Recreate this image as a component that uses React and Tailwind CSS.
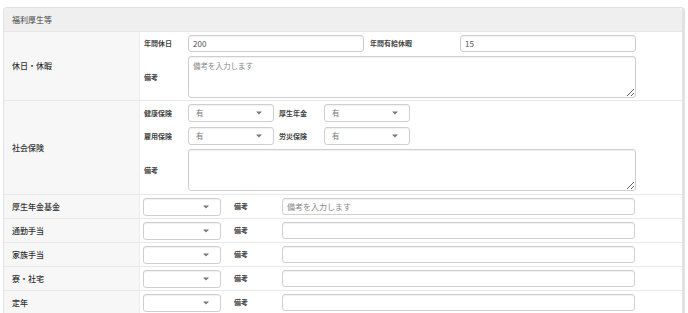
import React from 'react'

const font = { fontFamily: '"Noto Sans CJK JP", "Noto Sans", sans-serif' }

function Caret() {
    return <span className="absolute right-[11px] top-1/2 -translate-y-1/2 w-0 h-0 border-l-[3px] border-r-[3px] border-t-[3px] border-l-transparent border-r-transparent border-t-[#777]"></span>
}

function Select({ value, width }) {
    return (
        <div className={`relative h-[18px] ${width} border border-[#cfcfcf] rounded-[3px] bg-white shadow-[inset_0_1px_1px_rgba(0,0,0,0.06)] flex items-center pl-[7px] text-[7.5px] text-[#777]`}>
            {value}
            <Caret />
        </div>
    )
}

function SubLabel({ children, width }) {
    return <div className={`${width} shrink-0 text-[7px] font-bold text-[#444]`}>{children}</div>
}

function TextInput({ value, placeholder, width }) {
    return (
        <input
            readOnly
            defaultValue={value}
            placeholder={placeholder}
            className={`h-[17px] ${width} border border-[#cfcfcf] rounded-[3px] bg-white shadow-[inset_0_1px_1px_rgba(0,0,0,0.06)] px-[4px] text-[8px] text-[#555] placeholder:text-[#888] outline-none`}
            style={font}
        />
    )
}

function Memo({ placeholder }) {
    return (
        <textarea
            readOnly
            placeholder={placeholder}
            className="h-[42px] w-[448px] border border-[#cfcfcf] rounded-[3px] bg-white shadow-[inset_0_1px_1px_rgba(0,0,0,0.06)] px-[4px] py-[3px] text-[7.5px] text-[#555] placeholder:text-[#888] outline-none block"
            style={font}
        ></textarea>
    )
}

function RowLabel({ children }) {
    return (
        <div className="w-[136px] shrink-0 bg-[#f7f7f7] border-r border-[#ececec] flex items-center pl-[8px] text-[8px] font-medium text-[#333]">
            {children}
        </div>
    )
}

const simpleRows = [
    { label: '厚生年金基金', placeholder: '備考を入力します' },
    { label: '通勤手当', placeholder: '' },
    { label: '家族手当', placeholder: '' },
    { label: '寮・社宅', placeholder: '' },
    { label: '定年', placeholder: '' },
]

function App() {
    return (
        <div className="w-[688px] h-[313px] overflow-hidden bg-white pt-[7px] pl-[3px] pr-[3px]" style={font}>
            <div className="border-l border-r-[3px] border-t border-[#e2e2e2] rounded-t-[4px] bg-white">
                <div className="h-[24px] bg-[#efefef] border-b border-[#e6e6e6] flex items-center pl-[8px] text-[8px] text-[#444] rounded-t-[4px]">
                    福利厚生等
                </div>

                <div className="flex border-b border-[#e8e8e8]">
                    <RowLabel>休日・休暇</RowLabel>
                    <div className="pl-[4px] pt-[3px] pb-[2px] flex flex-col gap-[4px]">
                        <div className="flex items-center">
                            <SubLabel width="w-[44px]">年間休日</SubLabel>
                            <TextInput value="200" width="w-[176px]" />
                            <div className="w-[6px]"></div>
                            <SubLabel width="w-[90px]">年間有給休暇</SubLabel>
                            <TextInput value="15" width="w-[176px]" />
                        </div>
                        <div className="flex items-center">
                            <SubLabel width="w-[44px]">備考</SubLabel>
                            <Memo placeholder="備考を入力します" />
                        </div>
                    </div>
                </div>

                <div className="flex border-b border-[#e8e8e8]">
                    <RowLabel>社会保険</RowLabel>
                    <div className="pl-[4px] pt-[3px] pb-[3px] flex flex-col gap-[5px]">
                        <div className="flex items-center">
                            <SubLabel width="w-[44px]">健康保険</SubLabel>
                            <Select value="有" width="w-[86px]" />
                            <div className="w-[5px]"></div>
                            <SubLabel width="w-[45px]">厚生年金</SubLabel>
                            <Select value="有" width="w-[86px]" />
                        </div>
                        <div className="flex items-center">
                            <SubLabel width="w-[44px]">雇用保険</SubLabel>
                            <Select value="有" width="w-[86px]" />
                            <div className="w-[5px]"></div>
                            <SubLabel width="w-[45px]">労災保険</SubLabel>
                            <Select value="有" width="w-[86px]" />
                        </div>
                        <div className="flex items-center -mt-[1px]">
                            <SubLabel width="w-[44px]">備考</SubLabel>
                            <Memo placeholder="" />
                        </div>
                    </div>
                </div>

                {simpleRows.map(row => {
                    return (
                        <div key={row.label} className="flex h-[24px] border-b border-[#e8e8e8]">
                            <RowLabel>{row.label}</RowLabel>
                            <div className="pl-[3px] flex items-center">
                                <Select value="" width="w-[78px]" />
                                <div className="w-[13px]"></div>
                                <SubLabel width="w-[48px]">備考</SubLabel>
                                <TextInput placeholder={row.placeholder} width="w-[353px]" />
                            </div>
                        </div>
                    )
                })}
            </div>
        </div>
    )
}

export default App
